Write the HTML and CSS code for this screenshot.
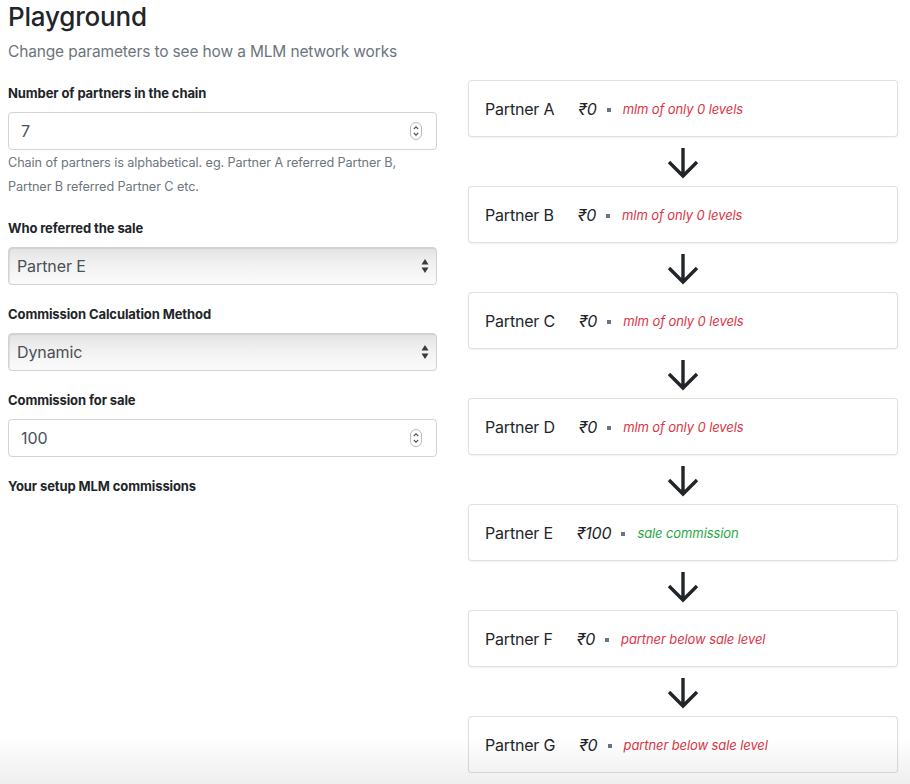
FILE: index.html
```html
<!DOCTYPE html>
<html lang="en">
<head>
<meta charset="utf-8">
<title>Playground</title>
<link rel="stylesheet" href="styles.css">
</head>
<body>
<div class="page">
  <h3 class="title">Playground</h3>
  <p class="lead">Change parameters to see how a MLM network works</p>
  <div class="layout">
    <form class="form">
      <div class="group">
        <label class="label">Number of partners in the chain</label>
        <div class="control">
          <span class="value">7</span>
          <svg class="spin" width="12" height="18" viewBox="0 0 12 18"><rect x="0.5" y="0.5" width="11" height="17" rx="5.5" fill="#fff" stroke="#b9b9b9"/><path d="M3.8 7 L6 4.8 L8.2 7" fill="none" stroke="#555" stroke-width="1.1"/><path d="M3.8 11 L6 13.2 L8.2 11" fill="none" stroke="#555" stroke-width="1.1"/></svg>
        </div>
        <p class="help">Chain of partners is alphabetical. eg. Partner A referred Partner B, Partner B referred Partner C etc.</p>
      </div>
      <div class="group">
        <label class="label">Who referred the sale</label>
        <div class="select">
          <span class="value">Partner E</span>
          <svg class="arrows" width="8" height="16" viewBox="0 0 8 16"><path d="M4 1 L7.5 6.5 L0.5 6.5 Z" fill="#3a3a3a"/><path d="M4 15 L7.5 9.5 L0.5 9.5 Z" fill="#3a3a3a"/></svg>
        </div>
      </div>
      <div class="group">
        <label class="label">Commission Calculation Method</label>
        <div class="select">
          <span class="value">Dynamic</span>
          <svg class="arrows" width="8" height="16" viewBox="0 0 8 16"><path d="M4 1 L7.5 6.5 L0.5 6.5 Z" fill="#3a3a3a"/><path d="M4 15 L7.5 9.5 L0.5 9.5 Z" fill="#3a3a3a"/></svg>
        </div>
      </div>
      <div class="group">
        <label class="label">Commission for sale</label>
        <div class="control">
          <span class="value">100</span>
          <svg class="spin" width="12" height="18" viewBox="0 0 12 18"><rect x="0.5" y="0.5" width="11" height="17" rx="5.5" fill="#fff" stroke="#b9b9b9"/><path d="M3.8 7 L6 4.8 L8.2 7" fill="none" stroke="#555" stroke-width="1.1"/><path d="M3.8 11 L6 13.2 L8.2 11" fill="none" stroke="#555" stroke-width="1.1"/></svg>
        </div>
      </div>
      <div class="group">
        <label class="label">Your setup MLM commissions</label>
      </div>
    </form>

    <div class="chain">
      <div class="card"><span class="name">Partner A</span><span class="amount">₹0</span><span class="dot"></span><span class="note bad">mlm of only 0 levels</span></div>
      <div class="arrow"><svg width="32" height="32" viewBox="0 0 32 32"><path d="M16 1 V29 M2 15 L16 29 L30 15" fill="none" stroke="#212529" stroke-width="3.4"/></svg></div>
      <div class="card"><span class="name">Partner B</span><span class="amount">₹0</span><span class="dot"></span><span class="note bad">mlm of only 0 levels</span></div>
      <div class="arrow"><svg width="32" height="32" viewBox="0 0 32 32"><path d="M16 1 V29 M2 15 L16 29 L30 15" fill="none" stroke="#212529" stroke-width="3.4"/></svg></div>
      <div class="card"><span class="name">Partner C</span><span class="amount">₹0</span><span class="dot"></span><span class="note bad">mlm of only 0 levels</span></div>
      <div class="arrow"><svg width="32" height="32" viewBox="0 0 32 32"><path d="M16 1 V29 M2 15 L16 29 L30 15" fill="none" stroke="#212529" stroke-width="3.4"/></svg></div>
      <div class="card"><span class="name">Partner D</span><span class="amount">₹0</span><span class="dot"></span><span class="note bad">mlm of only 0 levels</span></div>
      <div class="arrow"><svg width="32" height="32" viewBox="0 0 32 32"><path d="M16 1 V29 M2 15 L16 29 L30 15" fill="none" stroke="#212529" stroke-width="3.4"/></svg></div>
      <div class="card"><span class="name">Partner E</span><span class="amount">₹100</span><span class="dot"></span><span class="note good">sale commission</span></div>
      <div class="arrow"><svg width="32" height="32" viewBox="0 0 32 32"><path d="M16 1 V29 M2 15 L16 29 L30 15" fill="none" stroke="#212529" stroke-width="3.4"/></svg></div>
      <div class="card"><span class="name">Partner F</span><span class="amount">₹0</span><span class="dot"></span><span class="note bad">partner below sale level</span></div>
      <div class="arrow"><svg width="32" height="32" viewBox="0 0 32 32"><path d="M16 1 V29 M2 15 L16 29 L30 15" fill="none" stroke="#212529" stroke-width="3.4"/></svg></div>
      <div class="card"><span class="name">Partner G</span><span class="amount">₹0</span><span class="dot"></span><span class="note bad">partner below sale level</span></div>
    </div>
  </div>
</div>
<div class="fade"></div>
</body>
</html>
```

FILE: styles.css
```css
* { box-sizing: border-box; }
html, body { margin: 0; padding: 0; background: #fff; }
body {
  font-family: Inter, "Noto Sans", "DejaVu Sans", sans-serif;
  color: #212529;
  font-size: 16px;
  line-height: 1.5;
}
.page { padding: 0 12px 0 8px; }
.title {
  margin: 0;
  font-size: 26px;
  font-weight: 500;
  line-height: 34px;
  letter-spacing: -0.2px;
}
.lead {
  margin: 6px 0 0;
  font-size: 15.5px;
  line-height: 24px;
  color: #6c757d;
  letter-spacing: -0.15px;
}
.layout {
  display: grid;
  grid-template-columns: 429px 430px;
  column-gap: 31px;
  align-items: start;
}
.form { padding-top: 19px; }
.group { margin-bottom: 19px; }
.label {
  display: block;
  font-size: 13px;
  font-weight: 700;
  line-height: 20px;
  margin-bottom: 9px;
  letter-spacing: -0.1px;
}
.control {
  height: 38px;
  border: 1px solid #ced4da;
  border-radius: 4px;
  display: flex;
  align-items: center;
  justify-content: space-between;
  padding: 0 14px 0 12px;
  color: #495057;
  background: #fff;
}
.select {
  height: 38px;
  border: 1px solid #cfd2d6;
  border-radius: 4px;
  display: flex;
  align-items: center;
  justify-content: space-between;
  padding: 0 7px 0 8px;
  color: #495057;
  background: linear-gradient(#e3e3e3 0%, #f1f1f1 45%, #fbfbfb 100%);
  box-shadow: inset 1px 1px 1px rgba(0,0,0,0.08);
}
.value { font-size: 16px; letter-spacing: -0.1px; }
.spin { display: block; }
.arrows { display: block; }
.help {
  margin: 1px 0 0;
  max-width: 405px;
  font-size: 12.7px;
  line-height: 24px;
  color: #6c757d;
  letter-spacing: -0.1px;
}
.chain {
  padding-top: 16px;
  display: flex;
  flex-direction: column;
}
.card {
  height: 57px;
  border: 1px solid rgba(0,0,0,0.12);
  border-radius: 4px;
  box-shadow: 0 1px 2px rgba(0,0,0,0.06);
  display: flex;
  align-items: center;
  padding: 0 16px;
  background: #fff;
}
.name { font-size: 16px; margin-right: 24px; letter-spacing: -0.2px; }
.amount { font-size: 16px; font-style: italic; letter-spacing: -0.2px; }
.dot {
  width: 4px;
  height: 4px;
  background: #6c757d;
  margin: 2px 12px 0 10px;
}
.note { font-size: 13px; font-style: italic; letter-spacing: -0.1px; margin-top: 3px; }
.bad { color: #dc3545; }
.good { color: #28a745; }
.arrow {
  height: 49px;
  display: flex;
  align-items: center;
  justify-content: center;
  padding-top: 2px;
}
.arrow svg { display: block; }
.fade {
  position: fixed;
  left: 0;
  right: 0;
  bottom: 0;
  height: 46px;
  pointer-events: none;
  background: linear-gradient(rgba(0,0,0,0), rgba(0,0,0,0.065));
}
```
